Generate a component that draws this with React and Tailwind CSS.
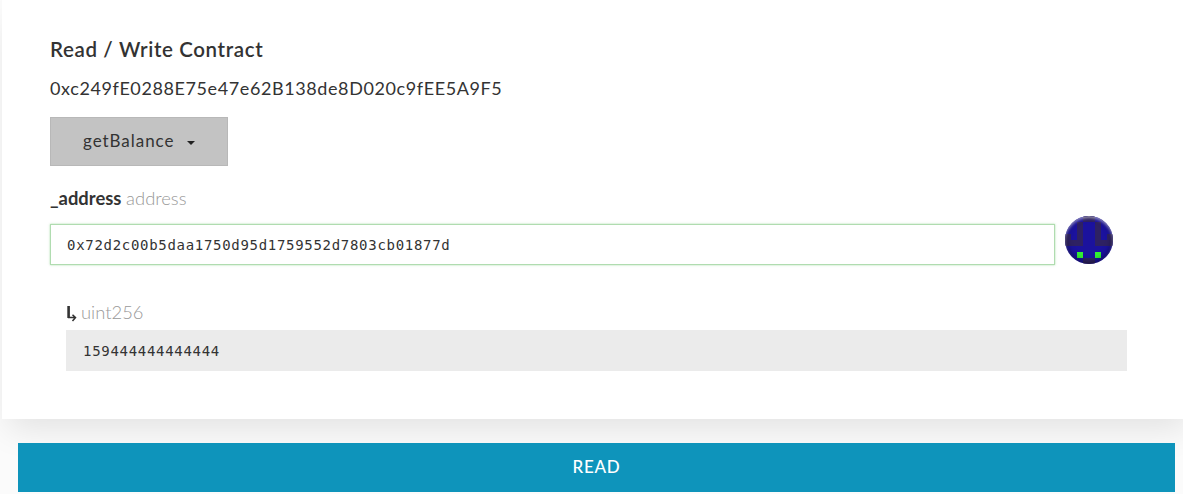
const G = "#1b129e", D = "#2e2163";

function Identicon() {
  return (
    <div className="relative h-12 w-12 shrink-0 overflow-hidden rounded-full">
      <svg viewBox="0 0 48 48" className="block h-12 w-12" shapeRendering="crispEdges">
        <rect width="48" height="48" fill={G} />
        <path fill={D} d="M12 6h6v24h-18v-12h6v6h6zM36 6h-6v24h18v-12h-6v6h-6zM18 0h12v6h-12zM18 42h12v6h-12z" />
        <path fill="#32f032" d="M12 36h6v6h-6zM30 36h6v6h-6z" />
      </svg>
      <div className="absolute inset-0 rounded-full shadow-[inset_0_2px_3px_rgba(255,255,255,0.5),inset_0_-1px_6px_rgba(0,0,0,0.55)]" />
    </div>
  );
}

export default function App() {
  return (
    <div className="h-[494px] w-[1183px] overflow-hidden bg-[#fbfbfb] pl-0.5 font-[Lato,sans-serif] text-[#333]">
      <main className="h-[419px] w-[1192px] bg-white pl-12 pt-9 shadow-[0_16px_32px_-6px_rgba(0,0,0,0.1)]">
        <h1 className="h-[27px] text-[20.5px] leading-[27px] font-semibold tracking-[0.63px]">Read / Write Contract</h1>
        <p className="mt-3 h-[27px] text-[18px] leading-[27px] tracking-[0.6px]">0xc249fE0288E75e47e62B138de8D020c9fEE5A9F5</p>
        <button className="mt-[15px] flex h-[49px] w-[178px] items-center border border-[#b8b8b8] bg-[#c3c3c3] pb-0.5 pl-8 text-[17px] tracking-[0.95px]">
          getBalance
          <span className="ml-[13px] mt-1 border-x-4 border-t-4 border-x-transparent border-t-[#222]" />
        </button>
        <label className="mt-[19px] block h-[27px] text-[18.4px] leading-[27px]">
          <b>_address</b> <span className="font-light text-[#999]">address</span>
        </label>
        <div className="mt-1 flex h-12 w-[1063px] items-center justify-between">
          <div className="mt-[9px] flex h-[41px] w-[1005px] items-center border border-[#b0dcb0] pt-0.5 pl-4 font-['DejaVu_Sans_Mono',monospace] text-[14px] tracking-[0.7px] shadow-[0_0_2px_rgba(90,190,90,0.5)]">0x72d2c00b5daa1750d95d1759552d7803cb01877d</div>
          <Identicon />
        </div>
        <section className="mt-[35px] w-[1077px] pl-4">
          <p className="flex h-[27px] items-center text-[18.4px] leading-[27px] font-light text-[#999]">
            <svg viewBox="0 0 12 18" className="mr-[3px] h-[18px] w-3 fill-none stroke-[#333]"><path strokeWidth="2.6" d="M2.6 2v12" /><path strokeWidth="1.5" d="M2 13.6h7M6.5 10.8l3 2.8L6.5 17" /></svg>
            uint256
          </p>
          <div className="mt-1 flex h-[41px] items-center bg-[#ebebeb] pl-[17px] pt-0.5 font-['DejaVu_Sans_Mono',monospace] text-[14px] tracking-[0.7px]">159444444444444</div>
        </section>
      </main>
      <button className="relative mt-6 ml-4 flex h-[49px] w-[1157px] items-center justify-center bg-[#0e94bb] pb-0.5 text-[17px] font-medium tracking-[0.7px] text-white">READ</button>
    </div>
  );
}
